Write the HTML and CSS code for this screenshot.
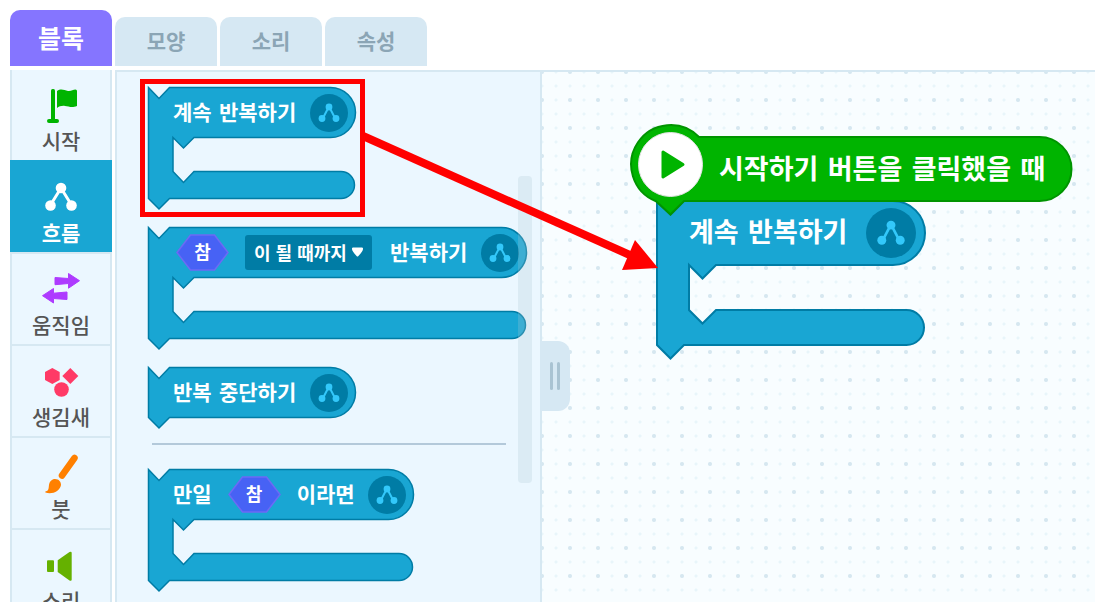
FILE: index.html
```html
<!DOCTYPE html>
<html lang="ko">

<head>
    <meta charset="UTF-8">
    <meta name="viewport" content="width=device-width, initial-scale=1.0">
    <title>블록</title>
    <link rel="stylesheet" href="styles.css">
</head>

<body>
    <!-- shared symbols -->
    <svg class="defs" width="0" height="0" aria-hidden="true">
        <symbol id="flow" viewBox="0 0 38 38">
            <path d="M12.5 25 L19 12.5 L25.5 25" fill="none" stroke="currentColor" stroke-width="2" />
            <circle cx="19" cy="13" r="3.4" fill="currentColor" />
            <circle cx="12" cy="24.5" r="3.4" fill="currentColor" />
            <circle cx="26" cy="24.5" r="3.4" fill="currentColor" />
        </symbol>
        <symbol id="hex" viewBox="0 0 53 37">
            <path d="M1 18.5 L14.5 1 H38.5 L52 18.5 L38.5 36 H14.5 Z" fill="#4762f5" stroke="#6c6af5" stroke-width="1.5" />
        </symbol>
    </svg>

    <nav class="tabs">
        <button class="tab active" type="button">블록</button>
        <button class="tab" type="button">모양</button>
        <button class="tab" type="button">소리</button>
        <button class="tab" type="button">속성</button>
    </nav>

    <div class="workspace">
        <nav class="category">
            <button class="item" type="button">
                <svg class="icon" viewBox="0 0 40 40" fill="#00b400">
                    <rect x="10" y="3" width="4" height="33" rx="1.5" />
                    <rect x="6" y="33" width="12" height="4" rx="2" />
                    <path d="M16 5 C20 2 23 4 27 5 C30 5.5 32 3.5 34.5 3.5 Q36 3.5 36 5 V20 C31 22 28 20.5 24 20 C21 19.5 18 20.5 16 22 Z" />
                </svg>
                <span>시작</span>
            </button>
            <button class="item active" type="button">
                <svg class="icon" viewBox="0 0 40 40" fill="#fff">
                    <path d="M9.5 27 L20 10 L30.5 27" fill="none" stroke="#fff" stroke-width="3" />
                    <circle cx="20" cy="10" r="5.3" />
                    <circle cx="9.5" cy="27.5" r="5.3" />
                    <circle cx="30.5" cy="27.5" r="5.3" />
                </svg>
                <span>흐름</span>
            </button>
            <button class="item" type="button">
                <svg class="icon" viewBox="0 0 40 40" fill="#ae3bff" stroke="#ae3bff" stroke-linejoin="round">
                    <path d="M14 7.5 L27.5 8.5 V3.5 L38.5 10.7 L27.5 18.2 V13.5 L14 14.7 Z" />
                    <path d="M26 22 L12.5 23.2 V18.5 L1.5 25.7 L12.5 33 V28.5 L26 29.5 Z" />
                </svg>
                <span>움직임</span>
            </button>
            <button class="item" type="button">
                <svg class="icon" viewBox="0 0 40 40" fill="#ff3a66">
                    <path d="M11.3 6 L18.7 10 V18 L11.3 22 L4 18 V10 Z" />
                    <path d="M29.3 6 L37.3 14 L29.3 22 L21.3 14 Z" />
                    <circle cx="20.5" cy="27.5" r="7.3" />
                </svg>
                <span>생김새</span>
            </button>
            <button class="item" type="button">
                <svg class="icon" viewBox="0 0 40 40" fill="#ff8000">
                    <path d="M33.5 4 L21 21.5" stroke="#ff8000" stroke-width="6.5" stroke-linecap="round" />
                    <path d="M14 25 C18 25 20 28 20 31 C19 37 11 41 4.5 38.5 C4 38 4.3 37.5 5 37.3 C8 36.5 7.5 34 8 31 C8.5 27.5 11 25 14 25 Z" />
                </svg>
                <span>붓</span>
            </button>
            <button class="item" type="button">
                <svg class="icon" viewBox="0 0 40 40" fill="#65b100">
                    <rect x="6" y="14.3" width="7" height="11.7" rx="1" />
                    <path d="M16.7 14.3 L28.5 6 Q30.7 5 30.7 7 V33.5 Q30.7 35.5 28.5 34.5 L16.7 26 Z" />
                </svg>
                <span>소리</span>
            </button>
        </nav>

        <section class="palette">
            <div class="block">
                <svg class="shape" width="208" height="123">
                    <path d="M.5 .5 L11 11.5 L21.5 .5 H182.5 a25 25 0 0 1 0 50 H46 L35.5 61 L25 50.5 V84.5 L35.5 95.5 L46 84.5 H193 a13.5 13.5 0 0 1 0 27 H21.5 L11 122 L.5 111.5 Z" />
                </svg>
                <div class="content">
                    <span>계속 반복하기</span>
                    <svg class="badge"><use href="#flow" /></svg>
                </div>
            </div>

            <div class="block">
                <svg class="shape" width="379" height="123">
                    <path d="M.5 .5 L11 11.5 L21.5 .5 H353.5 a25 25 0 0 1 0 50 H46 L35.5 61 L25 50.5 V84.5 L35.5 95.5 L46 84.5 H364 a13.5 13.5 0 0 1 0 27 H21.5 L11 122 L.5 111.5 Z" />
                </svg>
                <div class="content">
                    <span class="value"><svg><use href="#hex" /></svg><span>참</span></span>
                    <span class="field">
                        <select aria-label="조건">
                            <option>이 될 때까지</option>
                        </select>
                        <svg class="arrow" viewBox="0 0 13 10"><path d="M2 1.5 H11 Q11.5 3.5 6.5 8.5 Q1.5 3.5 2 1.5 Z" fill="#fff" stroke="#fff" stroke-width="2" stroke-linejoin="round" /></svg>
                    </span>
                    <span>반복하기</span>
                    <svg class="badge"><use href="#flow" /></svg>
                </div>
            </div>

            <div class="block">
                <svg class="shape" width="208" height="62">
                    <path d="M.5 .5 L11 11.5 L21.5 .5 H182.5 a25 25 0 0 1 0 50 H21.5 L11 61 L.5 50.5 Z" />
                </svg>
                <div class="content">
                    <span>반복 중단하기</span>
                    <svg class="badge"><use href="#flow" /></svg>
                </div>
            </div>

            <hr class="line">

            <div class="block">
                <svg class="shape" width="266" height="123">
                    <path d="M.5 .5 L11 11.5 L21.5 .5 H240.5 a25 25 0 0 1 0 50 H46 L35.5 61 L25 50.5 V84.5 L35.5 95.5 L46 84.5 H251 a13.5 13.5 0 0 1 0 27 H21.5 L11 122 L.5 111.5 Z" />
                </svg>
                <div class="content">
                    <span>만일</span>
                    <span class="value"><svg><use href="#hex" /></svg><span>참</span></span>
                    <span>이라면</span>
                    <svg class="badge"><use href="#flow" /></svg>
                </div>
            </div>

            <div class="scrollbar"></div>
        </section>

        <section class="board">
            <button class="splitter" type="button" aria-label="크기 조절"><i></i><i></i></button>

            <div class="block big loop">
                <svg class="shape" width="270" height="160">
                    <path d="M1 1 L14.5 14.5 L28 1 H237 a32 32 0 0 1 0 64 H60 L46.5 78.5 L33 65 V110 L46.5 123.5 L60 110 H250.500 a17.5 17.5 0 0 1 0 35 H28 L14.5 158.5 L1 145 Z" />
                </svg>
                <div class="content">
                    <span>계속 반복하기</span>
                    <svg class="badge"><use href="#flow" /></svg>
                </div>
            </div>

            <div class="block big start">
                <svg class="shape" width="443" height="92">
                    <path d="M69 13 H409.5 a32 32 0 0 1 0 64 H54 L40.5 90.5 L26 77.2 A39.5 39.5 0 1 1 69 13 Z" />
                    <circle cx="40.5" cy="40.5" r="32" fill="#fff" stroke="#e2e2e2" stroke-width="1" />
                    <path d="M33 28 L53 40.5 L33 53 Z" fill="#00b400" stroke="#00b400" stroke-width="3" stroke-linejoin="round" />
                </svg>
                <div class="content">
                    <span>시작하기 버튼을 클릭했을 때</span>
                </div>
            </div>
        </section>
    </div>

    <!-- red box and arrow over the blocks -->
    <svg class="guide" width="670" height="290" aria-hidden="true">
        <rect x="142.5" y="81.5" width="220" height="133" fill="none" stroke="#f00" stroke-width="5" />
        <path d="M363 136 L632 256" stroke="#f00" stroke-width="8" />
        <path d="M635 240 L658 268 L622 270 Z" fill="#f00" />
    </svg>
</body>

</html>
```
FILE: styles.css
```css
* {
    margin: 0;
    padding: 0;
    box-sizing: border-box;
}

body {
    display: flex;
    flex-direction: column;
    height: 100vh;
    overflow: hidden;
    position: relative;
    background-color: #fff;
    font-family: "DejaVu Sans", "Noto Sans CJK KR", sans-serif;
}

button,
select {
    border: none;
    font-family: inherit;
    cursor: pointer;
}

svg {
    display: block;
}

.defs {
    position: absolute;
}

/* tabs */
.tabs {
    display: flex;
    align-items: flex-end;
    gap: 3px;
    padding: 10px 10px 4px;
}

.tab {
    width: 102px;
    height: 49px;
    padding-bottom: 4px;
    border-radius: 10px 10px 0 0;
    background-color: #d6e8f3;
    color: #8ba5b5;
    font-size: 21px;
    font-weight: bold;
}

.tab.active {
    height: 56px;
    padding-bottom: 2px;
    background-color: #8575ff;
    color: #fff;
    font-size: 25px;
}

.workspace {
    display: flex;
    flex: 1;
    min-height: 0;
}

/* category */
.category {
    flex: none;
    width: 102px;
    margin: 0 3px 0 10px;
    overflow: hidden;
}

.item {
    display: flex;
    flex-direction: column;
    align-items: center;
    width: 100%;
    height: 92px;
    padding-top: 16px;
    border: 2px solid #d6e8f2;
    border-bottom: none;
    background-color: #ebf7ff;
    color: #555;
    font-size: 21px;
    font-weight: 500;
    line-height: 32px;
}

.item:first-child {
    height: 90px;
    border-top: none;
}

.item.active {
    border-color: #19a6d3;
    background-color: #19a6d3;
    color: #fff;
    font-weight: bold;
}

.icon {
    flex: none;
    width: 40px;
    height: 40px;
}

/* palette */
.palette {
    flex: none;
    position: relative;
    width: 427px;
    padding: 15px 0 0 31px;
    border: 2px solid #d6e8f2;
    border-bottom: none;
    background-color: #ebf7ff;
    overflow: hidden;
}

.scrollbar {
    position: absolute;
    top: 104px;
    right: 8px;
    width: 14px;
    height: 307px;
    border-radius: 4px;
    background-color: rgba(170, 200, 210, 0.25);
}

.line {
    width: 354px;
    height: 2px;
    margin: -3px 0 24px 4px;
    border: none;
    background-color: #b3c9da;
}

/* block: the shape and its content share one grid cell */
.block {
    display: grid;
    justify-content: start;
    margin-bottom: 17px;
    color: #fff;
    font-size: 21px;
    font-weight: bold;
    white-space: nowrap;
}

.shape,
.content {
    grid-area: 1 / 1;
}

.shape {
    fill: #19a6d3;
    stroke: #007ca5;
    stroke-width: 1.5px;
    overflow: visible;
}

.content {
    display: flex;
    align-items: center;
    gap: 13px;
    height: 51px;
    padding: 0 8px 0 25px;
    line-height: 30px;
}

.badge {
    width: 38px;
    height: 38px;
    margin-left: auto;
    border-radius: 50%;
    background-color: #007ca5;
    color: #33c8fa;
}

.value {
    display: grid;
    place-items: center;
    margin: 0 3px;
    font-size: 18px;
}

.value > * {
    grid-area: 1 / 1;
}

.value svg {
    width: 53px;
    height: 37px;
}

.field {
    position: relative;
    margin-right: 5px;
}

.field select {
    display: block;
    width: 127px;
    height: 35px;
    padding: 0 24px 2px 9px;
    border-radius: 3px;
    background-color: #007ca5;
    color: #fff;
    font-family: "Noto Sans CJK KR", sans-serif;
    font-size: 18px;
    font-weight: bold;
    appearance: none;
}

.arrow {
    position: absolute;
    top: 12px;
    right: 8px;
    width: 13px;
    height: 10px;
    pointer-events: none;
}

/* board */
.board {
    flex: 1;
    min-width: 0;
    position: relative;
    border-top: 2px solid #d6e8f2;
    background-color: #f8fdff;
    background-image: radial-gradient(circle, #d6e7f0 1.5px, transparent 2.5px),
        radial-gradient(circle, #e8f5fa 1px, transparent 2px);
    background-size: 28px 28px, 14px 14px;
    background-position: -14px -14px, -7px -7px;
}

.splitter {
    display: flex;
    align-items: center;
    justify-content: center;
    gap: 4px;
    position: absolute;
    top: 269px;
    left: -2px;
    width: 30px;
    height: 70px;
    border-radius: 0 12px 12px 0;
    background-color: #d6e8f3;
}

.splitter i {
    width: 3px;
    height: 28px;
    border-radius: 2px;
    background-color: #a9c3d2;
}

.big {
    position: absolute;
    font-size: 27px;
}

.big .shape {
    stroke-width: 2px;
}

.big .content {
    height: 66px;
    padding: 0 10px 0 33px;
}

.big .badge {
    width: 50px;
    height: 50px;
}

.loop {
    top: 128px;
    left: 114px;
}

.start {
    top: 52px;
    left: 88px;
}

.start .shape {
    fill: #00b400;
    stroke: #009400;
}

.start .content {
    height: 92px;
    padding: 0 0 0 89px;
}

.guide {
    position: absolute;
    top: 0;
    left: 0;
    pointer-events: none;
}
```
